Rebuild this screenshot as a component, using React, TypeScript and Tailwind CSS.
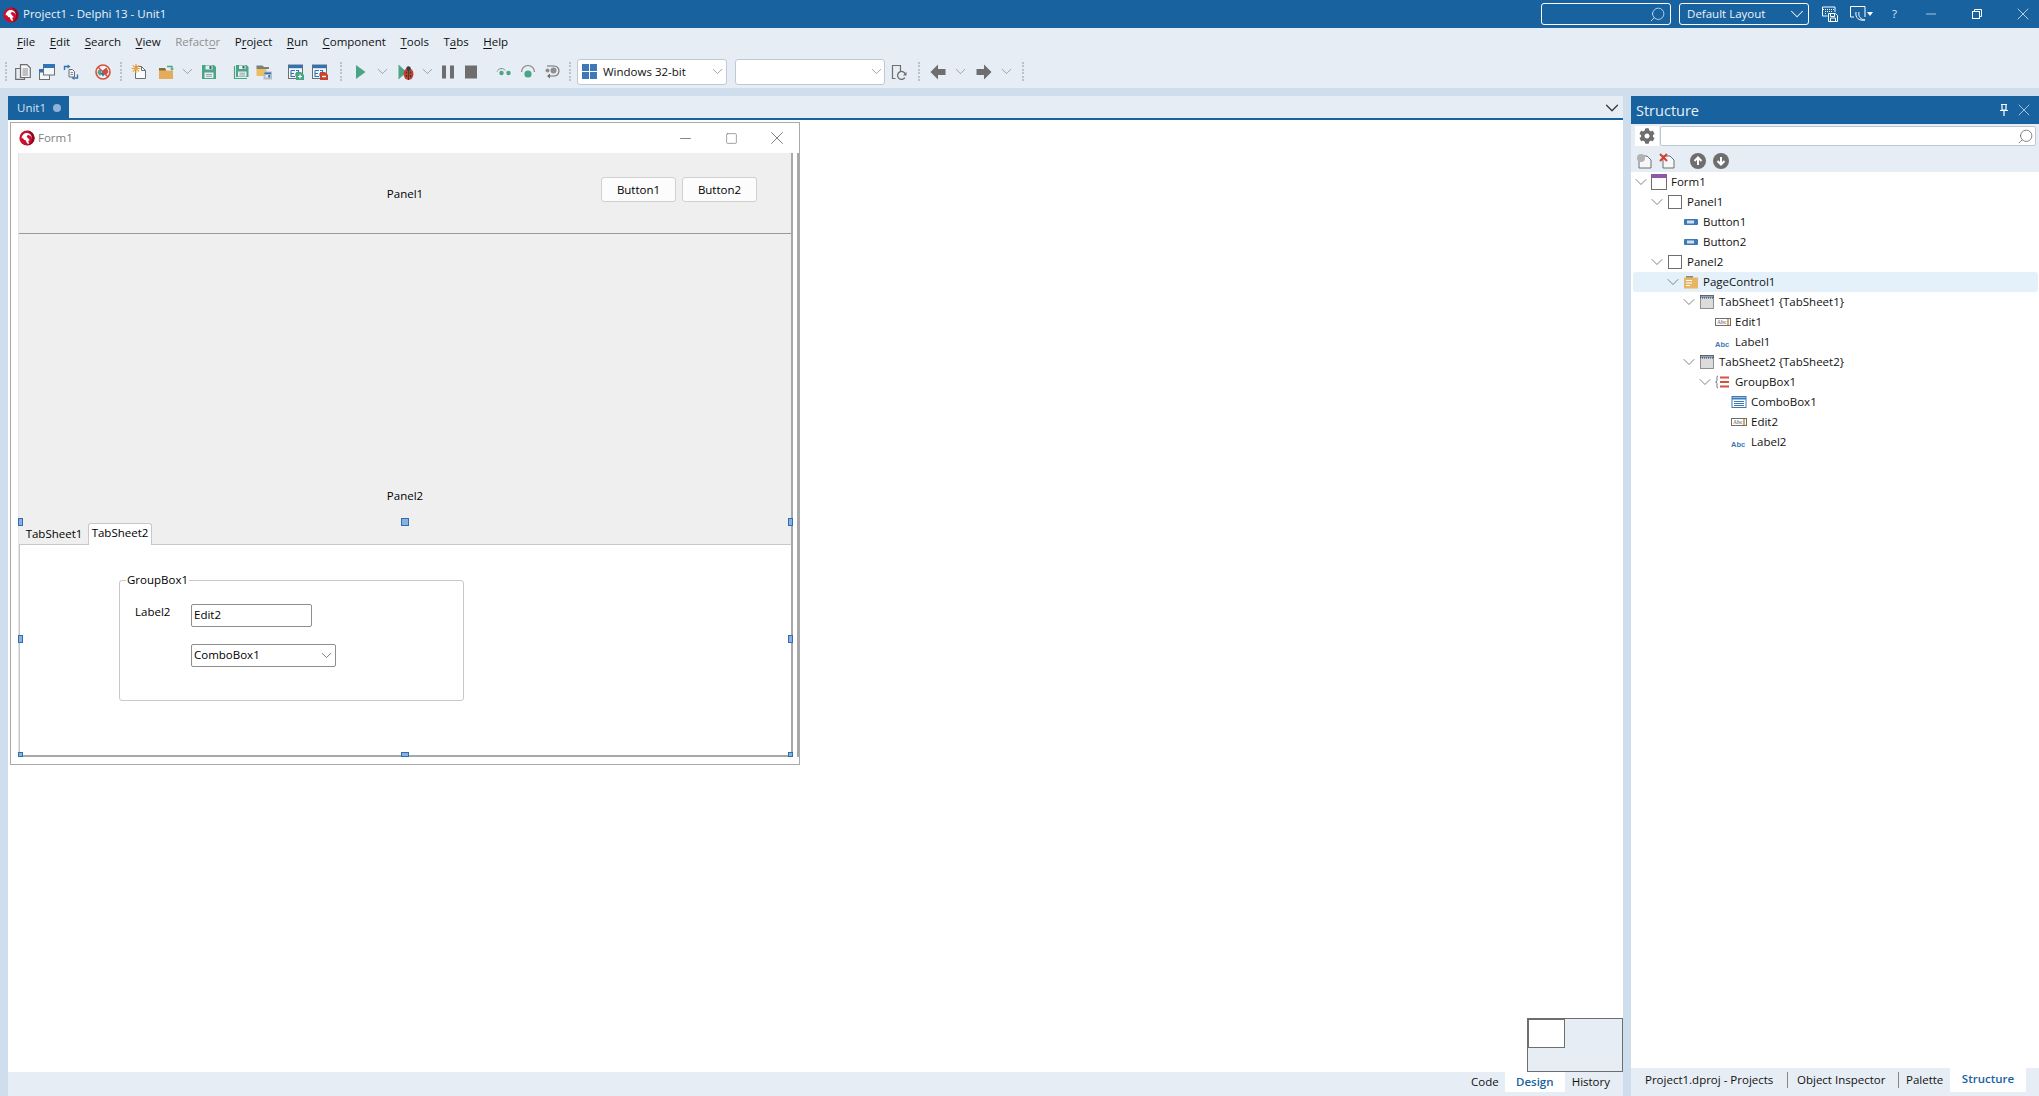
import React from 'react';
import { ChevronDown, Search, X, Minus, Square } from 'lucide-react';
import { FaCog } from 'react-icons/fa';

const GRAY = '#6e6e6e';
const GREEN = '#4aa584';
const BLUE = '#2f74b5';

function Svg({ size = 16, className, children }: { size?: number; className?: string; children: React.ReactNode }) {
  return (
    <svg width={size} height={size} viewBox="0 0 16 16" fill="none" className={className}>
      {children}
    </svg>
  );
}

function Logo({ size = 16, className }: { size?: number; className?: string }) {
  return (
    <Svg size={size} className={className}>
      <circle cx="8" cy="8" r="7.6" fill="#c8102e" />
      <path d="M8 0.4a7.6 7.6 0 0 1 0 15.2c3-1 5-3.8 5-7.2S11 1.400 8 .4z" fill="#8c0a20" />
      <path d="M2.600 8.200C2.800 4.600 6 2.500 9.200 3.200c2.400.6 3.800 2.700 3.500 5.200-.3-1.800-1.500-3-3.200-3.300-1 .2-1.600.8-1.800 1.600l3 3.200-1.500 1.200 1 2.700-2-.2-1.600-3.300L5.200 10 4 8.200z" fill="#fff" />
    </Svg>
  );
}

function Grip() {
  return (
    <span className="flex h-5 w-[2px] flex-col justify-between">
      {[0, 1, 2, 3, 4, 5].map((i) => (
        <span key={i} className="block h-[2px] w-[2px] bg-[#b9c3cc]" />
      ))}
    </span>
  );
}

const SmallChevron = ({ className }: { className?: string }) => (
  <ChevronDown size={17} strokeWidth={1.2} className={`-mx-[2px] shrink-0 text-[#8a96a3] ${className ?? ''}`} />
);

// toolbar glyphs
const PagesIcon = () => (
  <Svg>
    <path d="M5.500 .7h6.500l3.300 3.300v9.500H5.500z" fill="#f4f7fa" stroke={GRAY} strokeWidth="1.200" />
    <path d="M5 4.500H.7v10.800h8.800v-1.800" stroke={GRAY} strokeWidth="1.200" />
    <path d="M7.500 5h5.500M7.500 7h5.500M7.500 9h5.500M7.500 11h5.500" stroke={GRAY} strokeWidth=".8" />
  </Svg>
);
const WindowsIcon = () => (
  <Svg>
    <rect x=".5" y="5.500" width="10" height="10" fill="#f4f7fa" stroke={GRAY} />
    <rect x="0" y="5" width="6" height="3.500" fill={BLUE} />
    <rect x="4.500" y=".5" width="11" height="10.500" fill="#f4f7fa" stroke={GRAY} />
    <rect x="4.500" y="0" width="11.500" height="4" fill={BLUE} />
  </Svg>
);
const SwapIcon = () => (
  <Svg>
    <path d="M1.500 6V2.500h4" stroke={BLUE} strokeWidth="1.400" />
    <path d="M4.500 0.500l3 2-3 2z" fill={BLUE} />
    <path d="M14.500 10.500v3.500h-3" stroke={BLUE} strokeWidth="1.400" />
    <path d="M11.500 12l-3 2 3 2z" fill={BLUE} />
    <path d="M6 5.500h3.500l2 2V13H6z" fill="#eef2f6" stroke={GRAY} />
    <path d="M7.500 8.500h2.500M7.500 10.500h2.500" stroke={GRAY} strokeWidth=".8" />
  </Svg>
);
const NoEntryIcon = () => (
  <Svg>
    <circle cx="8" cy="8" r="7" fill="#f3f6f9" stroke="#d94f3d" strokeWidth="1.600" />
    <path d="M2.500 9c0-3 2-4 3-3.500l1 4-1.500 2.500z" fill={GREEN} />
    <path d="M7 7l4.500-3.500L13.500 8l-3 3.500z" fill="#c9503e" />
    <path d="M5.500 9.500l3-2.500 1.500 3-2 2.500z" fill={BLUE} />
    <path d="M3 3l10 10" stroke="#d94f3d" strokeWidth="1.400" />
  </Svg>
);
const NewIcon = () => (
  <Svg>
    <path d="M4.500 2.500h6l4 4v8h-10z" fill="#fbfcfd" stroke={GRAY} />
    <path d="M10.500 2.500v4h4" stroke={GRAY} />
    <path d="M5 0v9M0.500 4.500h9M1.800 1.300l6.400 6.400M8.200 1.300L1.800 7.700" stroke="#e9a33f" strokeWidth="1.200" />
  </Svg>
);
const OpenIcon = () => (
  <Svg>
    <path d="M1 4h6l1 1.500V7H1z" fill="#8a6d2e" />
    <rect x="1" y="6.500" width="14" height="8.500" fill="#e3ad5e" />
    <path d="M9 2.500h5v3" stroke={GREEN} strokeWidth="1.300" />
    <path d="M12 4.500l2 2 2-2z" fill={GREEN} />
  </Svg>
);
const SaveIcon = () => (
  <Svg>
    <path d="M1 1h12l2 2v12H1z" fill={GREEN} />
    <rect x="4.500" y="1.500" width="7" height="4" fill="#e6edf5" />
    <rect x="8.500" y="2" width="2" height="3" fill="#4b5b5b" />
    <rect x="3.500" y="8.500" width="9" height="5.500" fill="#e6edf5" />
    <path d="M5 10.500h6M5 12.300h6" stroke="#9aa5ad" />
  </Svg>
);
const SaveAllIcon = () => (
  <Svg>
    <path d="M1.500 2v12.500H14" stroke={GREEN} strokeWidth="1.200" />
    <path d="M3 1h10.500L15.500 3v10H3z" fill={GREEN} />
    <rect x="6" y="1.500" width="6.500" height="3.500" fill="#e6edf5" />
    <rect x="9.500" y="2" width="2" height="2.500" fill="#4b5b5b" />
    <rect x="5" y="7.500" width="8.500" height="5" fill="#e6edf5" />
    <path d="M6.500 9.200h5.500M6.500 11h5.500" stroke="#9aa5ad" />
  </Svg>
);
const ProjectIcon = () => (
  <Svg>
    <path d="M0.500 1.500h6l1.500 1.500h5v2H.5z" fill="#7b7f7f" />
    <rect x="0.500" y="5" width="10" height="7" fill="#efbe5c" />
    <rect x="7.500" y="7.500" width="8.500" height="8" fill="#b3bdc7" />
    <rect x="8.500" y="8.500" width="6.500" height="1.600" fill={BLUE} />
    <rect x="9.500" y="11" width="2.500" height="2.500" fill="#e6edf5" />
    <rect x="12.500" y="11" width="1.500" height="2.500" fill={BLUE} />
  </Svg>
);
const UnitIcon = ({ add }: { add?: boolean }) => (
  <Svg>
    <rect x="0.500" y="1" width="14" height="13.500" fill="#f4f7fa" stroke={GRAY} />
    <rect x="0.500" y="1" width="14" height="3.200" fill={BLUE} />
    <path d="M3 6.500h4M3 6.500v6h4M3 9.500h3M8 6.500h2.500v3H8v3" stroke={BLUE} strokeWidth="1.100" />
    <path d="M8 8h5l3 3v5H8z" fill={add ? GREEN : '#c8432f'} />
    {add ? <path d="M12 10.500v4M10 12.500h4" stroke="#fff" strokeWidth="1.200" /> : <path d="M10 12.500h4" stroke="#fff" strokeWidth="1.400" />}
  </Svg>
);
const PlayIcon = () => (
  <Svg>
    <path d="M3 1l9.500 7L3 15z" fill={GREEN} />
  </Svg>
);
const DebugIcon = () => (
  <Svg>
    <path d="M0.500 0.500l8 7.500-8 7.500z" fill={GREEN} />
    <ellipse cx="10.500" cy="10" rx="5" ry="6" fill="#c8402e" />
    <circle cx="10.500" cy="4.500" r="2.200" fill="#3d3d3d" />
    <path d="M10.500 5v11" stroke="#3d3d3d" />
    <circle cx="8.500" cy="8.500" r=".9" fill="#3d3d3d" />
    <circle cx="12.500" cy="8.500" r=".9" fill="#3d3d3d" />
    <circle cx="8.500" cy="12" r=".9" fill="#3d3d3d" />
    <circle cx="12.500" cy="12" r=".9" fill="#3d3d3d" />
  </Svg>
);
const PauseIcon = () => (
  <Svg>
    <rect x="2" y="1.500" width="4" height="13" fill={GRAY} />
    <rect x="10" y="1.500" width="4" height="13" fill={GRAY} />
  </Svg>
);
const StopIcon = () => (
  <Svg>
    <rect x="2" y="1.500" width="12" height="13" fill={GRAY} />
  </Svg>
);
const StepOverIcon = () => (
  <Svg>
    <path d="M1 7.500a5 5 0 0 1 8.500-1" stroke="#7d8a8a" />
    <circle cx="5.500" cy="9" r="2.200" fill={GREEN} />
    <circle cx="12.500" cy="9" r="2.200" fill={GREEN} />
  </Svg>
);
const TraceIcon = () => (
  <Svg>
    <path d="M1.500 8a6.500 6.500 0 0 1 13 0" stroke="#7d8a8a" strokeWidth="1.200" />
    <circle cx="8" cy="10" r="3.600" fill={GREEN} />
  </Svg>
);
const RunToIcon = () => (
  <Svg>
    <path d="M3 2h7a5 5 0 0 1 0 10H5" stroke={GRAY} strokeWidth="1.100" />
    <path d="M6 9.500L3 12l3 2.500z" fill={GRAY} />
    <circle cx="3.500" cy="6.500" r="2" fill="#8e8e8e" />
    <circle cx="9.500" cy="6.500" r="3" fill="#8e8e8e" />
  </Svg>
);
const DeviceIcon = () => (
  <Svg>
    <path d="M4.500 14.500h-3V1.500h8v6" stroke={GRAY} strokeWidth="1.200" />
    <path d="M14.500 10.500a4 4 0 1 0-.6 3.200" stroke={GRAY} strokeWidth="1.300" />
    <path d="M15.500 8v3.500H12z" fill={GRAY} />
  </Svg>
);
const ArrowIcon = ({ flip }: { flip?: boolean }) => (
  <Svg className={flip ? '-scale-x-100' : ''}>
    <path d="M0.500 8L8 0.500V5h7.500v6H8v4.500z" fill={GRAY} />
  </Svg>
);

// tree glyphs
const treeIcons: Record<string, React.ReactNode> = {
  form: (
    <Svg>
      <rect x="0.500" y="0.500" width="15" height="15" fill="#fff" stroke={GRAY} />
      <rect x="0" y="0" width="16" height="4" fill="#8a5aa8" />
    </Svg>
  ),
  panel: (
    <Svg>
      <rect x="1.500" y="1.500" width="13" height="13" fill="#fff" stroke={GRAY} />
    </Svg>
  ),
  button: (
    <Svg>
      <rect x="1" y="5" width="14" height="6" rx="1" fill="#3d78b8" />
      <rect x="4" y="6.500" width="7" height="3" fill="#cfe0f0" />
    </Svg>
  ),
  pagecontrol: (
    <Svg>
      <path d="M3 2h7v2H3z" fill="#8a8a8a" />
      <rect x="1" y="3.500" width="14" height="11" fill="#e8b563" />
      <path d="M3 6.500h6M3 9h6M3 11.500h4" stroke="#fff" />
    </Svg>
  ),
  tabsheet: (
    <Svg>
      <rect x="1.500" y="1.500" width="13" height="13" fill="#dcdcdc" stroke="#333" strokeDasharray="1 1" />
      <rect x="1.500" y="1.500" width="13" height="2.500" fill="#8fa5bf" stroke="#333" strokeDasharray="1 1" />
    </Svg>
  ),
  edit: (
    <Svg>
      <rect x="0.500" y="4.500" width="15" height="7" fill="#fff" stroke={GRAY} />
      <text x="2" y="10" fontSize="5.500" fontWeight="700" fill="#8a8a8a" fontFamily="'Liberation Serif',serif">Abc</text>
      <path d="M13 5v6" stroke="#d08a2a" strokeWidth="1.500" />
    </Svg>
  ),
  label: (
    <Svg>
      <text x="0" y="13" fontSize="7.500" fontWeight="700" fill="#3d78b8" fontFamily="'Liberation Sans',sans-serif">Abc</text>
    </Svg>
  ),
  groupbox: (
    <Svg>
      <path d="M3 2c-1.500 0-1 2-1 4 0 1-.5 2-1.500 2 1 0 1.500 1 1.500 2 0 2-.5 4 1 4" stroke={GRAY} />
      <path d="M5 3.500h9M5 8h9M5 12.500h9" stroke="#d4503f" strokeWidth="2" />
    </Svg>
  ),
  combobox: (
    <Svg>
      <rect x="1" y="2.500" width="14" height="11" fill="#fff" stroke="#3d78b8" />
      <path d="M1 4.500h14" stroke="#3d78b8" strokeWidth="2" />
      <path d="M3 7.500h10M3 9.500h10M3 11.500h10" stroke="#3d78b8" />
    </Svg>
  ),
};

const treeRows = [
  { depth: 0, icon: 'form', label: 'Form1', open: true },
  { depth: 1, icon: 'panel', label: 'Panel1', open: true },
  { depth: 2, icon: 'button', label: 'Button1' },
  { depth: 2, icon: 'button', label: 'Button2' },
  { depth: 1, icon: 'panel', label: 'Panel2', open: true },
  { depth: 2, icon: 'pagecontrol', label: 'PageControl1', open: true, selected: true },
  { depth: 3, icon: 'tabsheet', label: 'TabSheet1 {TabSheet1}', open: true },
  { depth: 4, icon: 'edit', label: 'Edit1' },
  { depth: 4, icon: 'label', label: 'Label1' },
  { depth: 3, icon: 'tabsheet', label: 'TabSheet2 {TabSheet2}', open: true },
  { depth: 4, icon: 'groupbox', label: 'GroupBox1', open: true },
  { depth: 5, icon: 'combobox', label: 'ComboBox1' },
  { depth: 5, icon: 'edit', label: 'Edit2' },
  { depth: 5, icon: 'label', label: 'Label2' },
];

const menus: [string, string, string, string][] = [
  ['', 'F', 'ile', 'ml-[17px]'],
  ['', 'E', 'dit', 'ml-[14.5px]'],
  ['', 'S', 'earch', 'ml-[14.5px]'],
  ['', 'V', 'iew', 'ml-[14.5px]'],
  ['Refact', 'o', 'r', 'ml-[14.5px] text-[#8f8f8f]'],
  ['P', 'r', 'oject', 'ml-[14.5px]'],
  ['', 'R', 'un', 'ml-[14.5px]'],
  ['', 'C', 'omponent', 'ml-[14.5px]'],
  ['', 'T', 'ools', 'ml-[14.5px]'],
  ['T', 'a', 'bs', 'ml-[14.5px]'],
  ['', 'H', 'elp', 'ml-[14.5px]'],
];

function Handle({ className }: { className: string }) {
  return <span className={`absolute border border-[#2f6fb0] bg-[#8ab0de] ${className}`} />;
}

function Underlined({ pre, u, post }: { pre: string; u: string; post: string }) {
  return (
    <>
      {pre}
      <span className="underline underline-offset-2">{u}</span>
      {post}
    </>
  );
}

function DesignForm() {
  return (
    <div className="relative flex h-[643px] w-[790px] flex-col border border-[#a9a9a9] bg-white">
      <div className="flex h-[30px] shrink-0 items-center pl-2 text-[#808080]">
        <Logo />
        <span className="ml-[3px]">Form1</span>
        <Minus size={17} strokeWidth={1} className="ml-auto text-[#555]" />
        <Square size={13} strokeWidth={1} className="ml-[31px] text-[#555]" />
        <X size={22} strokeWidth={0.8} className="mr-[11px] ml-[28px] text-[#555]" />
      </div>
      <div className="flex flex-1 pb-[7px] pl-[7px] text-black">
        <div className="flex w-[776px] flex-col border-r-2 border-b-2 border-l border-[#a8a8a8] border-l-[#e4e4e4]">
          <div className="relative flex h-[81px] shrink-0 items-center justify-center border-b border-[#9a9a9a] bg-[#efefef] pt-[2px]">
            Panel1
            <div className="absolute top-[24px] right-[34px] flex gap-[6px]">
              {['Button1', 'Button2'].map((b) => (
                <button key={b} className="h-[25px] w-[75px] rounded-[3px] border border-[#d0d0d0] bg-[#fcfcfc]">
                  {b}
                </button>
              ))}
            </div>
          </div>
          <div className="flex flex-1 flex-col bg-[#efefef]">
            <div className="flex flex-1 items-end justify-center pb-[17px]">
              <span className="leading-5">Panel2</span>
            </div>
            <div className="-mb-px flex h-[22px] shrink-0 pl-px">
              <span className="flex h-[21px] w-[68px] items-center justify-center self-end pb-[2px]">TabSheet1</span>
              <span className="relative z-10 flex w-[64px] items-center justify-center rounded-t-[3px] border border-b-0 border-[#c8c8c8] bg-white pb-[3px]">
                TabSheet2
              </span>
            </div>
            <div className="h-[211px] shrink-0 border-t border-l border-[#c8c8c8] bg-white">
              <div className="relative mt-[35px] ml-[99px] flex h-[121px] w-[345px] flex-col gap-[17px] rounded-[3px] border border-[#c8c8c8] pt-[23px] pl-[71px]">
                <span className="absolute -top-[11px] left-[6px] bg-white px-px leading-5">GroupBox1</span>
                <span className="absolute top-[21px] left-[15px] leading-5">Label2</span>
                <div className="flex h-[23px] w-[121px] items-center rounded-[2px] border border-[#8e8e8e] pb-[2px] pl-[2px]">Edit2</div>
                <div className="flex h-[23px] w-[145px] items-center justify-between rounded-[2px] border border-[#8e8e8e] px-[2px] pb-[1px]">
                  ComboBox1
                  <SmallChevron className="-mr-[2px] text-[#666]" />
                </div>
              </div>
            </div>
          </div>
        </div>
        <div className="ml-[4px] h-full w-[2px] bg-[#a8a8a8]" />
      </div>
      <Handle className="top-[395px] left-[7px] h-[8px] w-[5px]" />
      <Handle className="top-[512px] left-[7px] h-[8px] w-[5px]" />
      <Handle className="top-[629px] left-[7px] h-[5px] w-[5px]" />
      <Handle className="top-[395px] left-[390px] h-[8px] w-[8px]" />
      <Handle className="top-[629px] left-[390px] h-[5px] w-[8px]" />
      <Handle className="top-[395px] left-[777px] h-[8px] w-[5px]" />
      <Handle className="top-[512px] left-[777px] h-[8px] w-[5px]" />
      <Handle className="top-[629px] left-[777px] h-[5px] w-[5px]" />
    </div>
  );
}

function StructurePanel() {
  return (
    <div className="flex w-[408px] shrink-0 flex-col bg-white">
      <div className="flex h-[28px] shrink-0 items-center bg-[#1862a0] pl-[5px] text-[14.5px] text-[#e8f0f7]">
        <span className="pt-[1px]">Structure</span>
        <svg width="14" height="14" viewBox="0 0 14 14" className="ml-auto" fill="none">
          <path d="M4 1.500h6M5 2v5h4V2M3 7.500h8M7 8v5" stroke="#fff" strokeWidth="1.200" />
        </svg>
        <X size={20} strokeWidth={1} className="mr-[5px] ml-[3px] text-[#c6d8e8]" />
      </div>
      <div className="flex h-[48px] shrink-0 flex-col bg-[#e6edf5]">
        <div className="mt-[2px] flex h-[20px] shrink-0 pl-[4px]">
          <span className="flex w-[24px] items-center justify-center bg-white">
            <FaCog size={16} className="text-[#6e6e6e]" />
          </span>
          <div className="ml-px flex w-[376px] items-center justify-end rounded-[2px] border border-[#b9c9d2] bg-white pr-[1px]">
            <Search size={17} strokeWidth={1} className="-scale-x-100 text-[#555]" />
          </div>
        </div>
        <div className="flex flex-1 items-center pt-[4px] pl-[5px]">
          <Svg>
            <path d="M3 3h8l4 4v8H3z" fill="#f5f7fa" stroke={GRAY} />
            <circle cx="5" cy="5" r="4" fill="#b2b2b2" />
          </Svg>
          <Svg className="ml-[7px]">
            <path d="M4 3h7l4 4v8H4z" fill="#f5f7fa" stroke={GRAY} />
            <path d="M1 1l7 7M8 1L1 8" stroke="#d23f2e" strokeWidth="2" />
          </Svg>
          {['M8 12V4.500M4.500 8L8 4.500 11.500 8', 'M8 4v7.500M4.500 8L8 11.500 11.500 8'].map((d, i) => (
            <Svg key={d} className={i === 0 ? 'ml-[15px]' : 'ml-[7px]'}>
              <circle cx="8" cy="8" r="8" fill={GRAY} />
              <path d={d} stroke="#fff" strokeWidth="2" />
            </Svg>
          ))}
        </div>
      </div>
      <div className="flex-1 pr-px pl-[2px] text-[#111]">
        {treeRows.map((row) => (
          <div
            key={row.label}
            className={`flex h-5 items-center rounded-[3px] ${row.selected ? 'bg-[#e4f1fb]' : ''}`}
            style={{ paddingLeft: row.depth * 16 }}
          >
            <span className="flex w-[15px] shrink-0 justify-center">
              {row.open && <ChevronDown size={20} strokeWidth={1.1} className="shrink-0 text-[#777]" />}
            </span>
            <span className="ml-[3px] shrink-0">{treeIcons[row.icon]}</span>
            <span className="ml-[4px]">{row.label}</span>
          </div>
        ))}
      </div>
      <div className="flex h-[28px] shrink-0 items-start bg-[#e6edf5] pl-[14px] whitespace-nowrap text-[#111]">
        <span className="mt-[3px] w-[127px]">Project1.dproj - Projects</span>
        <span className="mt-[4px] ml-[15px] h-4 w-px bg-[#888]" />
        <span className="mt-[3px] ml-[9px] w-[87px]">Object Inspector</span>
        <span className="mt-[4px] ml-[14px] h-4 w-px bg-[#888]" />
        <span className="mt-[3px] ml-[7px] w-[36px]">Palette</span>
        <span className="ml-[8px] flex h-[24px] w-[76px] items-center justify-center bg-white pb-[2px] font-semibold text-[#1862a0]">Structure</span>
      </div>
    </div>
  );
}

export default function App() {
  return (
    <div className="flex h-screen w-full flex-col overflow-hidden bg-[#cfdeec] font-['Open_Sans',sans-serif] text-[11.5px] text-[#111]">
      <div className="flex h-7 shrink-0 items-center bg-[#1862a0] text-[#eef4f9]">
        <Logo size={16} className="mt-[1px] ml-[3px]" />
        <span className="ml-[4px]">Project1 - Delphi 13 - Unit1</span>
        <div className="ml-auto flex h-[22px] w-[130px] items-center justify-end rounded-[3px] border border-white pr-[4px]">
          <Search size={17} strokeWidth={1} className="-scale-x-100" />
        </div>
        <div className="ml-[8px] flex h-[22px] w-[130px] items-center justify-between rounded-[3px] border border-white pl-[7px]">
          Default Layout
          <ChevronDown size={22} strokeWidth={1.1} />
        </div>
        <svg width="16" height="16" viewBox="0 0 16 16" className="ml-[13px]" fill="none" stroke="#fff">
          <path d="M13 6V1H.5v9h5" />
          <path d="M1 3.500h12M3 5.500h8M3 7.500h2" strokeWidth="1" strokeDasharray="1 1" />
          <path d="M6.500 7.500h7l2 2v6h-9z" fill="#1862a0" />
          <path d="M8.500 8v2.500h4V8M8.500 15v-3h5v3" />
        </svg>
        <svg width="16" height="16" viewBox="0 0 16 16" className="ml-[12px]" fill="none" stroke="#fff">
          <path d="M4 11H.5V.5H15V11" />
          <path d="M6 6c-1 6 3 9 9 8-4-.5-7-3-6-8" />
        </svg>
        <span className="ml-[1px] h-0 w-0 border-x-[3px] border-t-[4px] border-x-transparent border-t-white" />
        <span className="ml-[19px] text-[#dfe9f2]">?</span>
        <Minus size={16} strokeWidth={1} className="ml-[26px]" />
        <svg width="10" height="10" viewBox="0 0 10 10" className="ml-[33px]" fill="none" stroke="#fff">
          <path d="M2.500 2V.5h7v7H8" />
          <rect x=".5" y="2.500" width="7" height="7" />
        </svg>
        <X size={20} strokeWidth={0.9} className="mr-[6px] ml-[31px]" />
      </div>

      <div className="flex h-[30px] shrink-0 items-center bg-[#e6edf5] pb-[2px]">
        {menus.map(([pre, u, post, cls]) => (
          <span key={u + post} className={cls}>
            <Underlined pre={pre} u={u} post={post} />
          </span>
        ))}
      </div>

      <div className="flex h-[30px] shrink-0 items-center bg-[#e6edf5] pb-[3px] pl-[5px]">
        <Grip />
        <span className="ml-[8px]"><PagesIcon /></span>
        <span className="ml-[8px]"><WindowsIcon /></span>
        <span className="ml-[8px]"><SwapIcon /></span>
        <span className="ml-[16px]"><NoEntryIcon /></span>
        <span className="ml-[9px]"><Grip /></span>
        <span className="ml-[9px]"><NewIcon /></span>
        <span className="ml-[11px]"><OpenIcon /></span>
        <span className="ml-[7px] flex"><SmallChevron /></span>
        <span className="ml-[7px]"><SaveIcon /></span>
        <span className="ml-[16px]"><SaveAllIcon /></span>
        <span className="ml-[7px]"><ProjectIcon /></span>
        <span className="ml-[16px]"><UnitIcon add /></span>
        <span className="ml-[8px]"><UnitIcon /></span>
        <span className="ml-[12px]"><Grip /></span>
        <span className="ml-[11px]"><PlayIcon /></span>
        <span className="ml-[7px] flex"><SmallChevron /></span>
        <span className="ml-[9px]"><DebugIcon /></span>
        <span className="ml-[7px] flex"><SmallChevron /></span>
        <span className="ml-[6px]"><PauseIcon /></span>
        <span className="ml-[7px]"><StopIcon /></span>
        <span className="ml-[17px]"><StepOverIcon /></span>
        <span className="ml-[8px]"><TraceIcon /></span>
        <span className="ml-[8px]"><RunToIcon /></span>
        <span className="ml-[9px]"><Grip /></span>
        <div className="ml-[6px] flex h-[26px] w-[150px] items-center justify-between rounded-[3px] border border-[#bfcad4] bg-white pr-[2px] pl-[4px]">
          <span className="flex items-center">
            <span className="grid h-[15px] w-[15px] grid-cols-2 gap-px">
              <span className="bg-[#3d78b8]" />
              <span className="bg-[#3d78b8]" />
              <span className="bg-[#3d78b8]" />
              <span className="bg-[#3d78b8]" />
            </span>
            <span className="ml-[6px]">Windows 32-bit</span>
          </span>
          <SmallChevron />
        </div>
        <div className="ml-[8px] flex h-[26px] w-[150px] items-center justify-end rounded-[3px] border border-[#bfcad4] bg-white pr-[1px]">
          <SmallChevron />
        </div>
        <span className="ml-[6px]"><DeviceIcon /></span>
        <span className="ml-[11px]"><Grip /></span>
        <span className="ml-[10px]"><ArrowIcon /></span>
        <span className="ml-[8px] flex"><SmallChevron /></span>
        <span className="ml-[9px]"><ArrowIcon flip /></span>
        <span className="ml-[8px] flex"><SmallChevron /></span>
        <span className="ml-[9px]"><Grip /></span>
      </div>

      <div className="h-2 shrink-0" />

      <div className="flex min-h-0 flex-1 pl-2">
        <div className="relative flex min-w-0 flex-1 flex-col bg-white">
          <div className="flex h-[24px] shrink-0 items-stretch border-b-2 border-[#1862a0] bg-[#e6edf5]">
            <div className="flex w-[61px] items-center bg-[#1862a0] pt-[2px] pl-[9px] text-[#d5e3f0]">
              Unit1
              <span className="ml-[7px] h-[8px] w-[8px] rounded-full bg-[#8fb3d9]" />
            </div>
            <ChevronDown size={22} strokeWidth={1.3} className="mt-[1px] ml-auto text-[#333]" />
          </div>
          <div className="flex-1 pt-[2px] pl-[2px]">
            <DesignForm />
          </div>
          <div className="flex h-[24px] shrink-0 items-start bg-[#e6edf5] pr-[13px] pl-[1463px] whitespace-nowrap">
            <span className="mt-[1px] w-[28px]">Code</span>
            <span className="ml-[6px] flex h-[20px] w-[60px] items-center justify-center bg-white font-semibold text-[#1862a0]">Design</span>
            <span className="mt-[1px] ml-[7px]">History</span>
          </div>
          <div className="absolute right-0 bottom-[24px] h-[54px] w-[96px] border border-[#6e6e6e] bg-[#e6edf5]">
            <div className="h-[29px] w-[37px] border border-[#6e6e6e] bg-white" />
          </div>
        </div>
        <div className="w-2 shrink-0" />
        <StructurePanel />
      </div>
    </div>
  );
}
